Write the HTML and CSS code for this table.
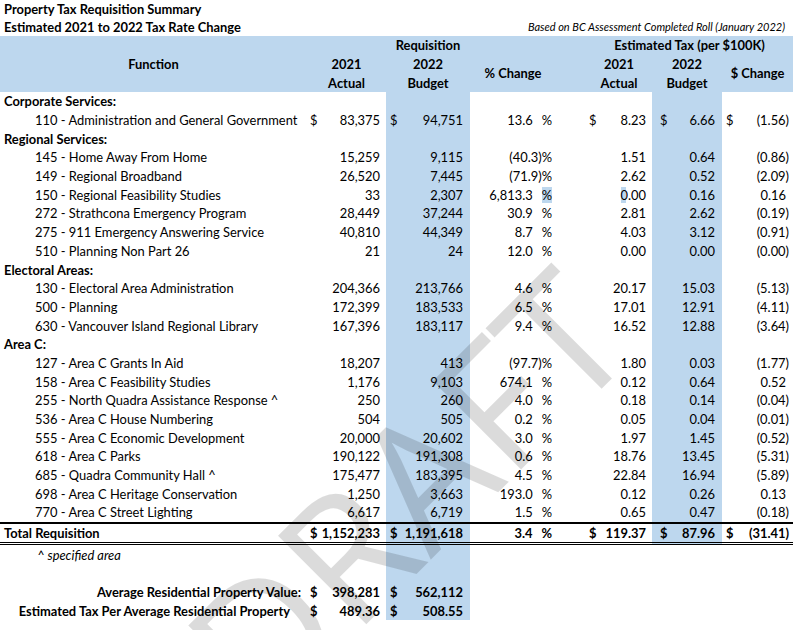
FILE: index.html
```html
<!DOCTYPE html>
<html>
<head>
<meta charset="utf-8">
<link rel="stylesheet" href="styles.css">
</head>
<body>
<div class="page">
  <div class="trow"><b>Property Tax Requisition Summary</b></div>
  <div class="trow split"><b>Estimated 2021 to 2022 Tax Rate Change</b><i class="note">Based on BC Assessment Completed Roll (January 2022)</i></div>
  <table class="sheet">
    <colgroup>
      <col class="w0"><col class="w1"><col class="w2"><col class="w3"><col class="w4"><col class="w5"><col class="w6"><col class="w7"><col class="w8">
    </colgroup>
    <thead>
      <tr>
        <th colspan="2" rowspan="3">Function</th>
        <th></th>
        <th>Requisition</th>
        <th></th>
        <th></th>
        <th colspan="3" class="est">Estimated Tax (per $100K)</th>
      </tr>
      <tr>
        <th>2021</th>
        <th>2022</th>
        <th rowspan="2">% Change</th>
        <th rowspan="2"></th>
        <th>2021</th>
        <th>2022</th>
        <th rowspan="2">$ Change</th>
      </tr>
      <tr>
        <th>Actual</th>
        <th>Budget</th>
        <th>Actual</th>
        <th>Budget</th>
      </tr>
    </thead>
    <tbody>
      <tr><td colspan="2" class="sec">Corporate Services:</td><td></td><td class="bb"></td><td></td><td></td><td></td><td class="tb"></td><td></td></tr>
      <tr><td></td><td class="fn">110 - Administration and General Government</td><td class="n a"><i class="d">$</i>83,375</td><td class="n b bb"><i class="d">$</i>94,751</td><td class="pc">13.6<span class="sp"></span>%</td><td></td><td class="n a"><i class="d">$</i>8.23</td><td class="n b tb"><i class="d">$</i>6.66</td><td class="n c"><i class="d">$</i>(1.56)</td></tr>
      <tr><td colspan="2" class="sec">Regional Services:</td><td></td><td class="bb"></td><td></td><td></td><td></td><td class="tb"></td><td></td></tr>
      <tr><td></td><td class="fn">145 - Home Away From Home</td><td class="n a">15,259</td><td class="n b bb">9,115</td><td class="pc">(40.3)%</td><td></td><td class="n a">1.51</td><td class="n b tb">0.64</td><td class="n c">(0.86)</td></tr>
      <tr><td></td><td class="fn">149 - Regional Broadband</td><td class="n a">26,520</td><td class="n b bb">7,445</td><td class="pc">(71.9)%</td><td></td><td class="n a">2.62</td><td class="n b tb">0.52</td><td class="n c">(2.09)</td></tr>
      <tr><td></td><td class="fn">150 - Regional Feasibility Studies</td><td class="n a">33</td><td class="n b bb">2,307</td><td class="pc">6,813.3<span class="sp"></span><span class="hl">%</span></td><td></td><td class="n a"><span class="hl0">0</span>.00</td><td class="n b tb">0.16</td><td class="n c pos">0.16</td></tr>
      <tr><td></td><td class="fn">272 - Strathcona Emergency Program</td><td class="n a">28,449</td><td class="n b bb">37,244</td><td class="pc">30.9<span class="sp"></span>%</td><td></td><td class="n a">2.81</td><td class="n b tb">2.62</td><td class="n c">(0.19)</td></tr>
      <tr><td></td><td class="fn">275 - 911 Emergency Answering Service</td><td class="n a">40,810</td><td class="n b bb">44,349</td><td class="pc">8.7<span class="sp"></span>%</td><td></td><td class="n a">4.03</td><td class="n b tb">3.12</td><td class="n c">(0.91)</td></tr>
      <tr><td></td><td class="fn">510 - Planning Non Part 26</td><td class="n a">21</td><td class="n b bb">24</td><td class="pc">12.0<span class="sp"></span>%</td><td></td><td class="n a">0.00</td><td class="n b tb">0.00</td><td class="n c">(0.00)</td></tr>
      <tr><td colspan="2" class="sec">Electoral Areas:</td><td></td><td class="bb"></td><td></td><td></td><td></td><td class="tb"></td><td></td></tr>
      <tr><td></td><td class="fn">130 - Electoral Area Administration</td><td class="n a">204,366</td><td class="n b bb">213,766</td><td class="pc">4.6<span class="sp"></span>%</td><td></td><td class="n a">20.17</td><td class="n b tb">15.03</td><td class="n c">(5.13)</td></tr>
      <tr><td></td><td class="fn">500 - Planning</td><td class="n a">172,399</td><td class="n b bb">183,533</td><td class="pc">6.5<span class="sp"></span>%</td><td></td><td class="n a">17.01</td><td class="n b tb">12.91</td><td class="n c">(4.11)</td></tr>
      <tr><td></td><td class="fn">630 - Vancouver Island Regional Library</td><td class="n a">167,396</td><td class="n b bb">183,117</td><td class="pc">9.4<span class="sp"></span>%</td><td></td><td class="n a">16.52</td><td class="n b tb">12.88</td><td class="n c">(3.64)</td></tr>
      <tr><td colspan="2" class="sec">Area C:</td><td></td><td class="bb"></td><td></td><td></td><td></td><td class="tb"></td><td></td></tr>
      <tr><td></td><td class="fn">127 - Area C Grants In Aid</td><td class="n a">18,207</td><td class="n b bb">413</td><td class="pc">(97.7)%</td><td></td><td class="n a">1.80</td><td class="n b tb">0.03</td><td class="n c">(1.77)</td></tr>
      <tr><td></td><td class="fn">158 - Area C Feasibility Studies</td><td class="n a">1,176</td><td class="n b bb">9,103</td><td class="pc">674.1<span class="sp"></span>%</td><td></td><td class="n a">0.12</td><td class="n b tb">0.64</td><td class="n c pos">0.52</td></tr>
      <tr><td></td><td class="fn">255 - North Quadra Assistance Response ^</td><td class="n a">250</td><td class="n b bb">260</td><td class="pc">4.0<span class="sp"></span>%</td><td></td><td class="n a">0.18</td><td class="n b tb">0.14</td><td class="n c">(0.04)</td></tr>
      <tr><td></td><td class="fn">536 - Area C House Numbering</td><td class="n a">504</td><td class="n b bb">505</td><td class="pc">0.2<span class="sp"></span>%</td><td></td><td class="n a">0.05</td><td class="n b tb">0.04</td><td class="n c">(0.01)</td></tr>
      <tr><td></td><td class="fn">555 - Area C Economic Development</td><td class="n a">20,000</td><td class="n b bb">20,602</td><td class="pc">3.0<span class="sp"></span>%</td><td></td><td class="n a">1.97</td><td class="n b tb">1.45</td><td class="n c">(0.52)</td></tr>
      <tr><td></td><td class="fn">618 - Area C Parks</td><td class="n a">190,122</td><td class="n b bb">191,308</td><td class="pc">0.6<span class="sp"></span>%</td><td></td><td class="n a">18.76</td><td class="n b tb">13.45</td><td class="n c">(5.31)</td></tr>
      <tr><td></td><td class="fn">685 - Quadra Community Hall ^</td><td class="n a">175,477</td><td class="n b bb">183,395</td><td class="pc">4.5<span class="sp"></span>%</td><td></td><td class="n a">22.84</td><td class="n b tb">16.94</td><td class="n c">(5.89)</td></tr>
      <tr><td></td><td class="fn">698 - Area C Heritage Conservation</td><td class="n a">1,250</td><td class="n b bb">3,663</td><td class="pc">193.0<span class="sp"></span>%</td><td></td><td class="n a">0.12</td><td class="n b tb">0.26</td><td class="n c pos">0.13</td></tr>
      <tr><td></td><td class="fn">770 - Area C Street Lighting</td><td class="n a">6,617</td><td class="n b bb">6,719</td><td class="pc">1.5<span class="sp"></span>%</td><td></td><td class="n a">0.65</td><td class="n b tb">0.47</td><td class="n c">(0.18)</td></tr>
      <tr class="total"><td colspan="2" class="sec">Total Requisition</td><td class="n a"><i class="d">$</i>1,152,233</td><td class="n b bb"><i class="d">$</i>1,191,618</td><td class="pc">3.4<span class="sp"></span>%</td><td></td><td class="n a"><i class="d">$</i>119.37</td><td class="n b tb"><i class="d">$</i>87.96</td><td class="n c"><i class="d">$</i>(31.41)</td></tr>
      <tr><td></td><td class="spec">^ specified area</td><td></td><td class="bb"></td><td></td><td></td><td></td><td></td><td></td></tr>
      <tr><td></td><td></td><td></td><td class="bb"></td><td></td><td></td><td></td><td></td><td></td></tr>
      <tr class="strong"><td colspan="2" class="lbl">Average Residential Property Value:</td><td class="n a"><i class="d">$</i>398,281</td><td class="n b bb"><i class="d">$</i>562,112</td><td></td><td></td><td></td><td></td><td></td></tr>
      <tr class="strong"><td colspan="2" class="lbl lbl2">Estimated Tax Per Average Residential Property</td><td class="n a"><i class="d">$</i>489.36</td><td class="n b bb"><i class="d">$</i>508.55</td><td></td><td></td><td></td><td></td><td></td></tr>
    </tbody>
  </table>
  <div class="draft">DRAFT</div>
</div>
</body>
</html>
```
FILE: styles.css
```css
html, body {
  margin: 0;
  padding: 0;
  background: #ffffff;
}
.page {
  position: relative;
  width: 796px;
  height: 630px;
  overflow: hidden;
  font-family: "Lato", "Carlito", "Liberation Sans", sans-serif;
  font-size: 12.9px;
  color: #000;
}
.trow {
  height: 18px;
  line-height: 18px;
  padding-left: 4px;
  white-space: nowrap;
}
.split {
  display: flex;
  justify-content: space-between;
  width: 781px;
}
.note {
  font-size: 11px;
}
.sheet {
  border-collapse: collapse;
  table-layout: fixed;
  width: 793px;
}
.w0 { width: 30px; }
.w1 { width: 277px; }
.w2 { width: 79px; }
.w3 { width: 84px; }
.w4 { width: 86px; }
.w5 { width: 30px; }
.w6 { width: 66px; }
.w7 { width: 70px; }
.w8 { width: 71px; }
.sheet th {
  background: #bdd7ee;
  font-weight: bold;
  height: 18.67px;
  padding: 0;
  line-height: 18px;
  text-align: center;
  vertical-align: middle;
  white-space: nowrap;
}
.sheet td {
  height: 18.7px;
  padding: 0;
  line-height: 18px;
  white-space: nowrap;
  overflow: visible;
}
.sec {
  font-weight: bold;
  padding-left: 4px !important;
}
.fn {
  padding-left: 5px !important;
}
.spec {
  font-style: italic;
  padding-left: 7px !important;
}
.bb, .tb {
  background: #bdd7ee;
}
.n {
  text-align: right;
}
.d {
  float: left;
  font-style: normal;
}
.n.a { padding-right: 6px; }
.n.a .d { margin-left: 3px; }
.n.b { padding-right: 7px; }
.n.b .d { margin-left: 4px; }
.n.c { padding-right: 4px; }
.n.c .d { margin-left: 4px; }
.n.c.pos { padding-right: 7px; }
.sheet td.n.tb .d { margin-left: 8px; }
.pc {
  text-align: right;
  padding-right: 4px !important;
}
.sp {
  display: inline-block;
  width: 9px;
}
.hl { background: #bdd7ee; }
.hl0 { background: linear-gradient(90deg, #bdd7ee 0 70%, transparent 70%); }
.total td {
  font-weight: bold;
  border-top: 2px solid #000;
  border-bottom: 3px double #000;
}
.strong td {
  font-weight: bold;
}
.lbl {
  text-align: right;
  padding-right: 6px !important;
}
.lbl2 {
  padding-right: 17px !important;
}
.draft {
  position: absolute;
  left: 405px;
  top: 490px;
  font-family: "Open Sans", "Lato", sans-serif;
  font-weight: 400;
  font-size: 175px;
  line-height: 1;
  color: rgba(0, 0, 0, 0.14);
  transform: translate(-50%, -50%) rotate(-45deg);
  transform-origin: center center;
  pointer-events: none;
  white-space: nowrap;
}
```
